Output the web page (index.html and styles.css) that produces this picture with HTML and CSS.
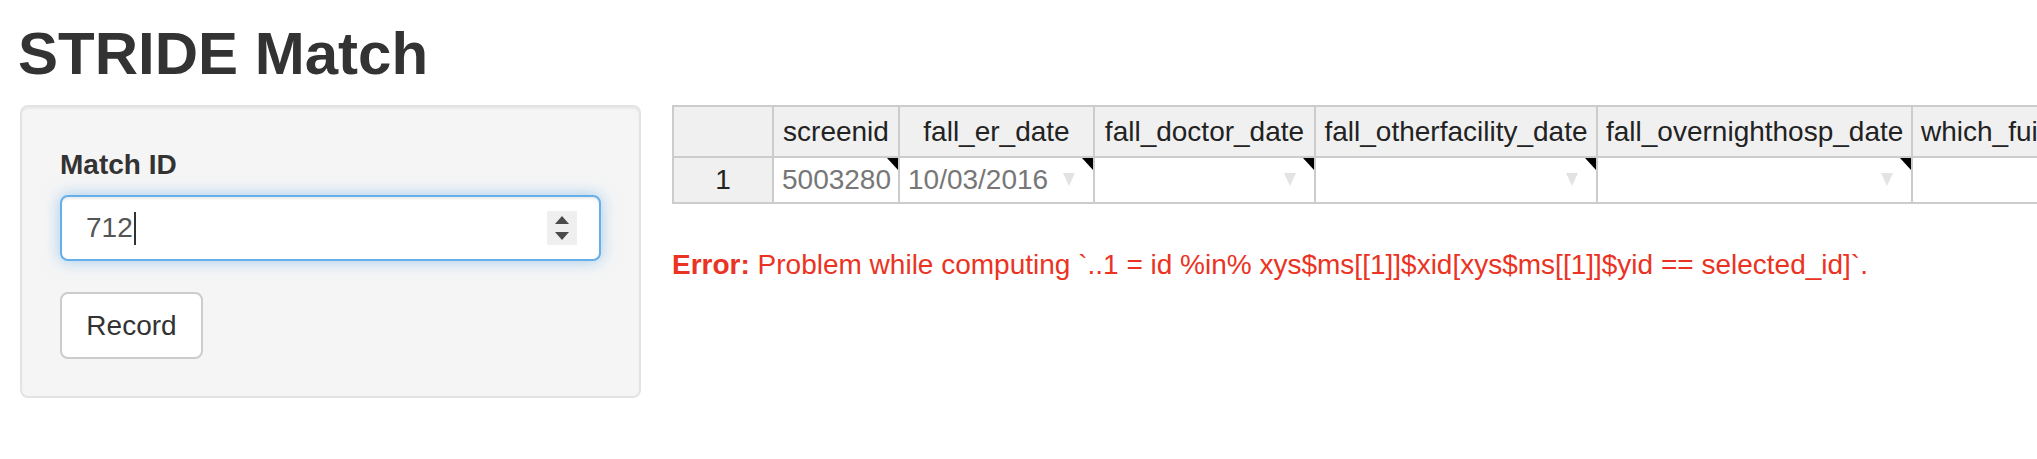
FILE: index.html
```html
<!DOCTYPE html>
<html lang="en">
<head>
<meta charset="utf-8">
<title>STRIDE Match</title>
<link rel="stylesheet" href="styles.css">
</head>
<body>
<div class="page">
  <h2 class="title">STRIDE Match</h2>
  <div class="layout">
    <aside class="well">
      <div class="form-group">
        <label class="control-label">Match ID</label>
        <div class="num-input">
          <span class="val">712</span><span class="caret"></span>
          <span class="spin"><i class="up"></i><i class="down"></i></span>
        </div>
      </div>
      <button class="btn" type="button">Record</button>
    </aside>
    <main class="main">
      <div class="hot-wrap">
        <table class="hot">
          <colgroup>
            <col class="c-rh"><col class="c-id"><col class="c-er"><col class="c-doc"><col class="c-oth"><col class="c-ovn"><col class="c-which">
          </colgroup>
          <thead>
            <tr>
              <th></th>
              <th>screenid</th>
              <th>fall_er_date</th>
              <th>fall_doctor_date</th>
              <th>fall_otherfacility_date</th>
              <th>fall_overnighthosp_date</th>
              <th class="left">which_fuid_date</th>
            </tr>
          </thead>
          <tbody>
            <tr>
              <th class="rowhead">1</th>
              <td class="ro num flag">5003280</td>
              <td class="ro flag">10/03/2016<span class="arrow"></span></td>
              <td class="flag"><span class="arrow"></span></td>
              <td class="flag"><span class="arrow"></span></td>
              <td class="flag"><span class="arrow"></span></td>
              <td class="last"><span class="arrow"></span></td>
            </tr>
          </tbody>
        </table>
      </div>
      <div class="error"><b>Error:</b> Problem while computing `..1 = id %in% xys$ms[[1]]$xid[xys$ms[[1]]$yid == selected_id]`.</div>
    </main>
  </div>
</div>
</body>
</html>
```

FILE: styles.css
```css
* { box-sizing: border-box; }
html, body {
  margin: 0;
  padding: 0;
  background: #fff;
  overflow: hidden;
}
body {
  font-family: "Liberation Sans", Arial, Helvetica, sans-serif;
  font-size: 28px;
  line-height: 40px;
  color: #333;
}
.page {
  padding: 0 20px;
  width: 2037px;
}
.title {
  margin: 21px 0 18px -2px;
  font-size: 60px;
  line-height: 66px;
  font-weight: 700;
  color: #333;
}
.layout {
  display: flex;
  align-items: flex-start;
  gap: 31px;
}
.well {
  flex: 0 0 621px;
  background: #f5f5f5;
  border: 2px solid #e3e3e3;
  border-radius: 8px;
  box-shadow: inset 0 2px 2px rgba(0,0,0,.05);
  padding: 38px 38px 37px;
}
.form-group {
  margin-bottom: 31px;
}
.control-label {
  display: block;
  font-weight: 700;
  line-height: 40px;
  margin-bottom: 10px;
}
.num-input {
  display: flex;
  align-items: center;
  height: 66px;
  background: #fff;
  border: 2px solid #66afe9;
  border-radius: 8px;
  padding: 0 22px 0 24px;
  color: #555;
  box-shadow: inset 0 2px 2px rgba(0,0,0,.075), 0 0 16px rgba(102,175,233,.6);
}
.num-input .val {
  line-height: 40px;
}
.num-input .caret {
  display: inline-block;
  width: 2px;
  height: 33px;
  background: #333;
  margin-left: 1px;
}
.spin {
  margin-left: auto;
  width: 30px;
  height: 34px;
  background: #efefef;
  display: flex;
  flex-direction: column;
  align-items: center;
  justify-content: center;
  gap: 8px;
}
.spin i {
  display: block;
  width: 0;
  height: 0;
  border-left: 7px solid transparent;
  border-right: 7px solid transparent;
}
.spin .up { border-bottom: 8px solid #4a4a4a; }
.spin .down { border-top: 8px solid #4a4a4a; }
.btn {
  display: block;
  width: 143px;
  height: 67px;
  padding: 0 24px;
  font-family: inherit;
  font-size: 28px;
  line-height: 40px;
  color: #333;
  background: #fff;
  border: 2px solid #ccc;
  border-radius: 8px;
}
.main {
  flex: 1 1 auto;
  min-width: 0;
}
.hot {
  border-collapse: collapse;
  table-layout: fixed;
  width: 1439px;
  font-size: 28px;
  line-height: 40px;
}
.c-rh { width: 100px; }
.c-id { width: 126px; }
.c-er { width: 195px; }
.c-doc { width: 221px; }
.c-oth { width: 282px; }
.c-ovn { width: 315px; }
.c-which { width: 200px; }
.hot th, .hot td {
  border: 2px solid #ccc;
  padding: 0 8px;
  white-space: nowrap;
  overflow: hidden;
  vertical-align: middle;
}
.hot thead th {
  height: 51px;
  background: #f0f0f0;
  color: #222;
  font-weight: 400;
  text-align: center;
}
.hot thead th.left { text-align: left; }
.hot th.rowhead {
  background: #f0f0f0;
  color: #222;
  font-weight: 400;
  text-align: center;
}
.hot td {
  height: 46px;
  background: #fff;
  color: #222;
  position: relative;
}
.hot td.ro { color: #777; }
.hot td.num { text-align: right; }
.hot td.flag::after {
  content: "";
  position: absolute;
  top: 0;
  right: 0;
  width: 0;
  height: 0;
  border-top: 12px solid #000;
  border-left: 11px solid transparent;
}
.arrow {
  position: absolute;
  top: 15px;
  right: 18px;
  width: 12px;
  height: 0;
  border-left: 6px solid transparent;
  border-right: 6px solid transparent;
  border-top: 13px solid #e3e3e3;
}
.error {
  margin-top: 41px;
  color: #eb3323;
  white-space: nowrap;
}
.error b { font-weight: 700; }
```
